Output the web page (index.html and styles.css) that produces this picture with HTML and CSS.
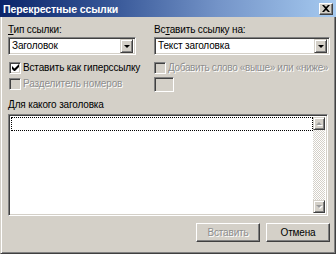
FILE: index.html
```html
<!DOCTYPE html>
<html lang="ru">
<head>
<meta charset="utf-8">
<title>Перекрестные ссылки</title>
<link rel="stylesheet" href="styles.css">
</head>
<body>
<div class="window">
  <div class="titlebar">
    <span class="title">Перекрестные ссылки</span>
    <span class="close">
      <svg width="8" height="7" viewBox="0 0 8 7"><path d="M0 0h2l2 2 2-2h2L5 3.5 8 7H6L4 5 2 7H0l3-3.5z" fill="#000"/></svg>
    </span>
  </div>
  <div class="client">
    <div class="cols">
      <div class="col col-left">
        <div class="label"><u>Т</u>ип ссылки:</div>
        <div class="combo">
          <span class="combo-text">Заголовок</span>
          <span class="combo-btn"><span class="tri-down"></span></span>
        </div>
        <div class="check-row">
          <span class="checkbox">
            <svg width="7" height="7" viewBox="0 0 7 7"><path d="M0 2v3l2 2h1l4-4V0L2.5 4.5z" fill="#000"/></svg>
          </span>
          <span class="check-text">Вставить как гиперссылку</span>
        </div>
        <div class="check-row disabled">
          <span class="checkbox off"></span>
          <span class="check-text">Разделитель номеров</span>
        </div>
      </div>
      <div class="col col-right">
        <div class="label">Вс<u>т</u>авить ссылку на:</div>
        <div class="combo">
          <span class="combo-text">Текст заголовка</span>
          <span class="combo-btn"><span class="tri-down"></span></span>
        </div>
        <div class="check-row disabled">
          <span class="checkbox off"></span>
          <span class="check-text narrow">Добавить слово «выше» или «ниже»</span>
        </div>
        <div class="small-field"></div>
      </div>
    </div>
    <div class="label list-label"><u>Д</u>ля какого заголовка</div>
    <div class="listbox">
      <div class="items">
        <div class="focus-item"></div>
      </div>
      <div class="scrollbar">
        <span class="sb-btn"><span class="tri-up dim"></span></span>
        <span class="sb-track"></span>
        <span class="sb-btn"><span class="tri-down dim"></span></span>
      </div>
    </div>
    <div class="buttons">
      <span class="btn disabled-btn">Вставить</span>
      <span class="btn">Отмена</span>
    </div>
  </div>
</div>
</body>
</html>
```
FILE: styles.css
```css
* { box-sizing: border-box; }
html, body { margin: 0; padding: 0; }
body {
  width: 336px;
  height: 254px;
  overflow: hidden;
  font-family: "Liberation Sans", Arial, sans-serif;
  font-size: 10px;
  letter-spacing: -0.15px;
  color: #000;
  background: #d4d0c8;
}
.window {
  width: 336px;
  height: 254px;
  display: flex;
  flex-direction: column;
  background: #d4d0c8;
}
.titlebar {
  height: 17px;
  flex: none;
  display: flex;
  align-items: center;
  justify-content: space-between;
  padding: 0 3px 0 3px;
  background: linear-gradient(to right, #0a246a 0%, #3a5a9a 35%, #7494c8 65%, #a6caf0 100%);
}
.title {
  color: #fff;
  font-weight: bold;
  font-size: 10.5px;
  letter-spacing: -0.1px;
}
.close {
  width: 14px;
  height: 12px;
  display: flex;
  align-items: center;
  justify-content: center;
  background: #d4d0c8;
  border: 1px solid;
  border-color: #fff #404040 #404040 #fff;
  box-shadow: inset -1px -1px #808080;
}
.client {
  flex: 1;
  display: flex;
  flex-direction: column;
  border-style: solid;
  border-width: 0 1px 1px 1px;
  border-color: #d4d0c8 #404040 #404040 #d4d0c8;
  box-shadow: inset 1px 0 #fff, inset -1px -1px #808080;
}
.cols {
  display: flex;
  gap: 18px;
  margin: 7px 0 0 7px;
}
.col { display: flex; flex-direction: column; }
.col-left { width: 128px; }
.col-right { width: 176px; }
.label {
  height: 13px;
  line-height: 12px;
  white-space: nowrap;
}
.label u { text-decoration: underline; }
.combo {
  height: 18px;
  display: flex;
  align-items: center;
  justify-content: space-between;
  background: #fff;
  border: 1px solid;
  border-color: #808080 #fff #fff #808080;
  box-shadow: inset 1px 1px #404040, inset -1px -1px #d4d0c8;
  padding: 2px;
}
.combo-text {
  padding-left: 1px;
  line-height: 12px;
  white-space: nowrap;
}
.combo-btn {
  width: 13px;
  height: 14px;
  display: flex;
  align-items: center;
  justify-content: center;
  background: #d4d0c8;
  border: 1px solid;
  border-color: #d4d0c8 #404040 #404040 #d4d0c8;
  box-shadow: inset 1px 1px #fff, inset -1px -1px #808080;
}
.tri-down {
  width: 0;
  height: 0;
  border-left: 3px solid transparent;
  border-right: 3px solid transparent;
  border-top: 3px solid #000;
}
.tri-up {
  width: 0;
  height: 0;
  border-left: 3px solid transparent;
  border-right: 3px solid transparent;
  border-bottom: 3px solid #000;
}
.tri-down.dim { border-top-color: #9a9a9a; filter: drop-shadow(1px 1px 0 #fff); }
.tri-up.dim { border-bottom-color: #9a9a9a; filter: drop-shadow(1px 1px 0 #fff); }
.check-row {
  height: 13px;
  display: flex;
  align-items: center;
  gap: 2px;
  margin-top: 6px;
  padding-left: 1px;
  white-space: nowrap;
}
.check-row + .check-row { margin-top: 3px; }
.checkbox {
  width: 12px;
  height: 12px;
  flex: none;
  display: flex;
  align-items: center;
  justify-content: center;
  background: #fff;
  border: 1px solid;
  border-color: #808080 #fff #fff #808080;
  box-shadow: inset 1px 1px #404040, inset -1px -1px #d4d0c8;
}
.checkbox.off { background: #d4d0c8; }
.check-text { line-height: 12px; }
.check-text.narrow { letter-spacing: -0.35px; }
.disabled .check-text,
.disabled-btn {
  color: #8e8e8e;
  text-shadow: 1px 1px 0 #fff;
}
.col-right .check-row { padding-left: 0; }
.small-field {
  width: 20px;
  height: 15px;
  margin-top: 3px;
  background: #d4d0c8;
  border: 1px solid;
  border-color: #808080 #fff #fff #808080;
  box-shadow: inset 1px 1px #404040, inset -1px -1px #d4d0c8;
}
.list-label { margin: 7px 0 0 7px; }
.listbox {
  height: 102px;
  margin: 2px 7px 0 7px;
  display: flex;
  background: #fff;
  border: 1px solid;
  border-color: #808080 #fff #fff #808080;
  box-shadow: inset 1px 1px #404040, inset -1px -1px #d4d0c8;
  padding: 2px 2px 2px 2px;
}
.items { flex: 1; }
.focus-item {
  height: 14px;
  border: 1px dotted #000;
}
.scrollbar {
  width: 12px;
  display: flex;
  flex-direction: column;
}
.sb-btn {
  height: 13px;
  flex: none;
  display: flex;
  align-items: center;
  justify-content: center;
  background: #d4d0c8;
  border: 1px solid;
  border-color: #d4d0c8 #404040 #404040 #d4d0c8;
  box-shadow: inset 1px 1px #fff, inset -1px -1px #808080;
}
.sb-track {
  flex: 1;
  background-color: #fff;
  background-image: repeating-conic-gradient(#d4d0c8 0 25%, #fff 0 50%);
  background-size: 2px 2px;
}
.buttons {
  display: flex;
  justify-content: flex-end;
  gap: 6px;
  margin: 7px 5px 0 0;
}
.btn {
  width: 64px;
  height: 19px;
  display: flex;
  align-items: center;
  justify-content: center;
  background: #d4d0c8;
  border: 1px solid;
  border-color: #fff #404040 #404040 #fff;
  box-shadow: inset -1px -1px #808080;
  line-height: 12px;
}
```
